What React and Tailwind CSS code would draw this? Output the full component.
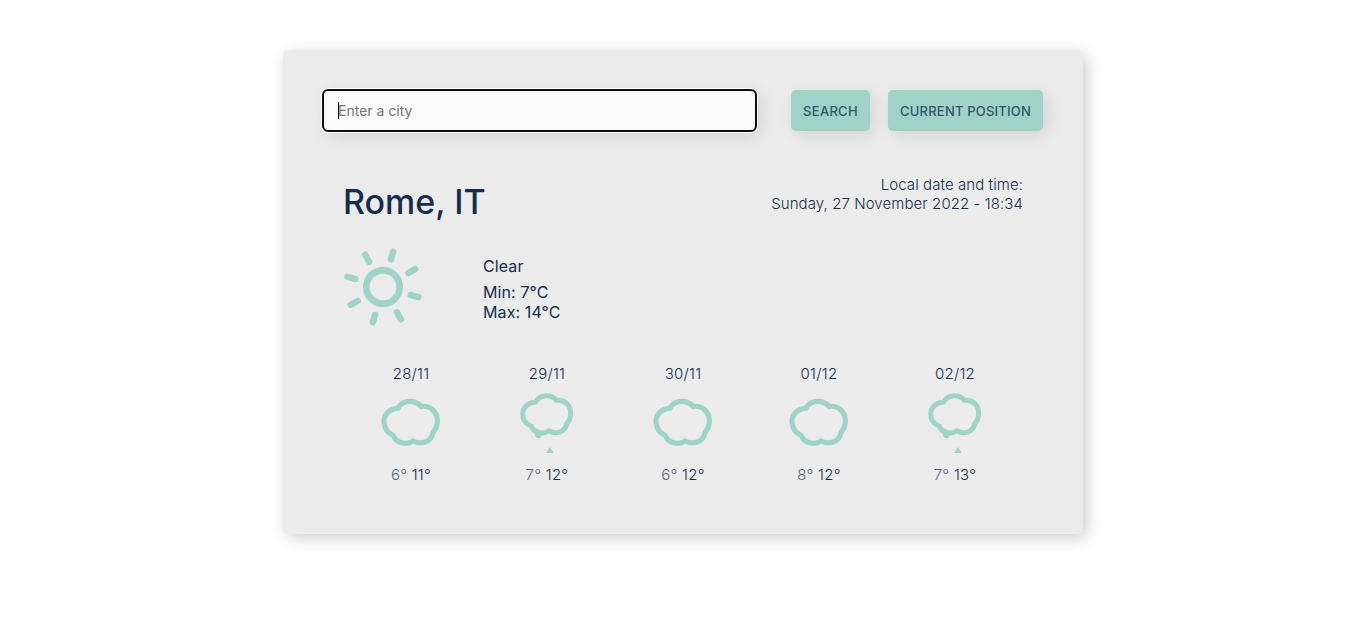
const RAYS = [16, 61, 106, 151, 196, 241, 286, 331];

const FORECAST = [
  { date: "28/11", icon: "cloud", min: "6°", max: "11°" },
  { date: "29/11", icon: "rain", min: "7°", max: "12°" },
  { date: "30/11", icon: "cloud", min: "6°", max: "12°" },
  { date: "01/12", icon: "cloud", min: "8°", max: "12°" },
  { date: "02/12", icon: "rain", min: "7°", max: "13°" },
];

function SunIcon() {
  return (
    <svg className="size-[90px] shrink-0" viewBox="0 0 270 270" fill="none">
      <circle cx="129" cy="141" r="50" stroke="#9fd3c7" strokeWidth="20" />
      {RAYS.map((a) => (
        <rect
          key={a}
          x="119.5"
          y="21"
          width="19"
          height="43"
          rx="8.5"
          fill="#9fd3c7"
          transform={`rotate(${a} 129 141)`}
        />
      ))}
    </svg>
  );
}

function CloudIcon() {
  return (
    <svg className="size-[75px]" viewBox="3 0 225 225" fill="none">
      <path
        d="M74 70C90 43 127 43 144 64C175 61 193 83 193 108C193 124 187 134 180 143C175 172 143 180 120 168C99 182 70 174 61 152C43 145 33 127 33 110C33 88 49 71 74 70Z"
        stroke="#9fd3c7"
        strokeWidth="15.5"
      />
    </svg>
  );
}

function RainIcon() {
  return (
    <svg className="size-[75px]" viewBox="0 0 225 225" fill="none">
      <path
        d="M76 52C90 27 124 27 140 46C167 44 182 63 182 86C182 100 176 109 170 117C165 142 138 149 116 138C98 150 71 142 63 123C48 117 38 103 38 87C38 67 53 53 76 52Z"
        stroke="#9fd3c7"
        strokeWidth="15"
      />
      <path d="M69 138C76 144 74 160 85 160C94 160 92 151 99 147Z" fill="#9fd3c7" />
      <path d="M120 186L131 204H109Z" fill="#9fd3c7" />
    </svg>
  );
}

export default function App() {
  return (
    <div className="flex min-h-[625px] items-start justify-center bg-white pt-[50px] font-['Inter',sans-serif] text-[#142d4c]">
      <main className="h-[484px] w-[800px] rounded-[5px] bg-[#ebebeb] shadow-[4px_4px_16px_rgba(0,0,0,0.2)]">
        <form className="flex items-center pt-[39px] pl-[39px]" onSubmit={(e) => e.preventDefault()}>
          <div className="relative h-[43px] w-[435px]">
            <input
              type="text"
              placeholder="Enter a city"
              className="block size-full rounded-[6px] border-2 border-[#101010] bg-[#fafafa] pl-[14px] text-[14px] outline-none shadow-[0_0_0_1px_#fff,4px_4px_16px_rgba(0,0,0,0.1)] placeholder:text-[#757575]"
            />
            <span className="absolute top-[13px] left-[16px] h-[17px] w-px bg-black" />
          </div>
          <button className="ml-[34px] h-[41px] w-[79px] rounded-[5px] bg-[#9fd3c7] pt-[2px] text-[13px] font-medium tracking-[0.3px] whitespace-nowrap text-[#385170] shadow-[4px_4px_16px_rgba(0,0,0,0.1)]">
            SEARCH
          </button>
          <button className="ml-[18px] h-[41px] w-[155px] rounded-[5px] bg-[#9fd3c7] pt-[2px] text-[13px] font-medium tracking-[0.2px] whitespace-nowrap text-[#385170] shadow-[4px_4px_16px_rgba(0,0,0,0.1)]">
            CURRENT POSITION
          </button>
        </form>

        <section className="mt-[43px] flex h-[58px] items-start justify-between px-[60px]">
          <h1 className="mt-[6px] text-[34px] leading-[42px] font-medium">Rome, IT</h1>
          <p className="text-right text-[15px] leading-[19px] font-light tracking-[0.08px]">
            Local date and time:
            <br />
            Sunday, 27 November 2022 - 18:34
          </p>
        </section>

        <section className="mt-[7px] flex h-[90px] pl-[57px]">
          <SunIcon />
          <div className="ml-[53px] pt-[16px] text-[16px] leading-[20px] tracking-[0.1px]">
            <p>Clear</p>
            <p className="mt-[6px]">Min: 7°C</p>
            <p>Max: 14°C</p>
          </div>
        </section>

        <section className="mt-[34px] flex pl-[60px]">
          {FORECAST.map((d) => (
            <div key={d.date} className="flex w-[136px] flex-col items-center text-[15px] leading-[19px] tracking-[0.25px]">
              <p className="font-light">{d.date}</p>
              <div className="mt-[2px]">{d.icon === "rain" ? <RainIcon /> : <CloudIcon />}</div>
              <p className="mt-[5px]">
                <span className="font-light opacity-70">{d.min}</span> <span className="font-[350]">{d.max}</span>
              </p>
            </div>
          ))}
        </section>
      </main>
    </div>
  );
}
